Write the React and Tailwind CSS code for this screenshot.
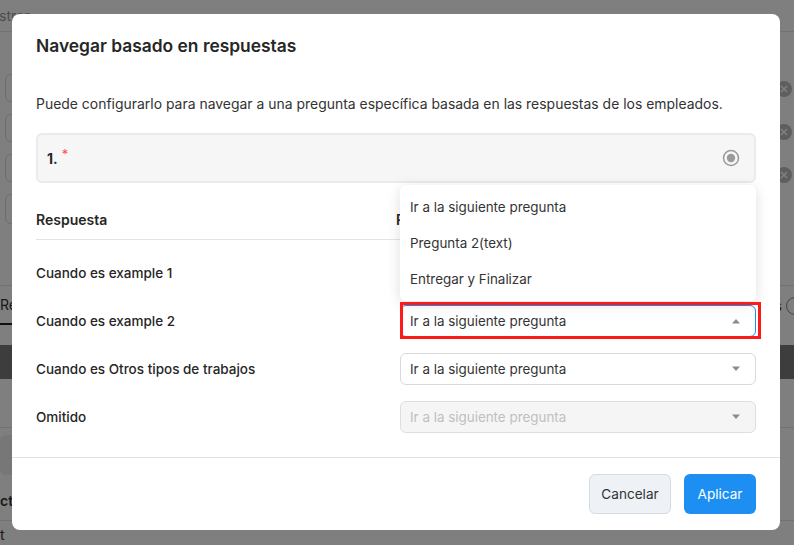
import React from "react";

const font = { fontFamily: "Inter, 'Noto Sans', sans-serif" };

function Caret({ up = false, color = "#8c8c8c" }) {
  return (
    <svg width="10" height="6" viewBox="0 0 10 6" className="shrink-0">
      {up ? (
        <path d="M1 5.5 L5 1 L9 5.5 Z" fill={color} />
      ) : (
        <path d="M1 0.5 L9 0.5 L5 5 Z" fill={color} />
      )}
    </svg>
  );
}

function Select({ disabled = false, focused = false, up = false }) {
  return (
    <div
      className={
        "h-8 w-[356px] flex items-center justify-between pl-[9px] pr-[14px] rounded-md border text-[13.4px] font-normal " +
        (disabled
          ? "bg-[#f5f5f5] border-[#dedede] text-[#bfbfbf]"
          : focused
          ? "bg-white border-[#1e8ff2] text-[#333]"
          : "bg-white border-[#d9d9d9] text-[#333]")
      }
    >
      <span>Ir a la siguiente pregunta</span>
      <Caret up={up} />
    </div>
  );
}

function CircleX() {
  return (
    <svg width="18" height="18" viewBox="0 0 18 18">
      <circle cx="9" cy="9" r="8" fill="#bdbdbd" />
      <path d="M6 6 L12 12 M12 6 L6 12" stroke="#fff" strokeWidth="1.6" />
    </svg>
  );
}

function Background() {
  return (
    <div className="absolute inset-0 bg-white flex flex-col text-[14px] text-[#333]">
      <div className="h-[33px] border-b border-[#e5e5e5] flex items-center">
        <span className="-ml-[22px] text-[#999]">Mostrar</span>
      </div>
      <div className="flex justify-between h-[210px]">
        <div className="flex flex-col gap-3 pt-[42px] pl-[5px]">
          <div className="w-[40px] h-[28px] border border-[#d9d9d9] rounded-md" />
          <div className="w-[40px] h-[28px] border border-[#d9d9d9] rounded-md" />
          <div className="w-[40px] h-[28px] border border-[#d9d9d9] rounded-md" />
          <div className="w-[40px] h-[30px] border border-[#d9d9d9] rounded-md" />
        </div>
        <div className="flex flex-col gap-[25px] pt-[48px] pr-[1px]">
          <CircleX />
          <CircleX />
          <CircleX />
        </div>
      </div>
      <div className="h-[50px] border-b border-[#e5e5e5]" />
      <div className="h-[40px] flex items-center justify-between">
        <div className="h-full flex items-center border-b-2 border-[#222] w-[40px]">
          <span>Respuestas</span>
        </div>
        <div className="flex items-center gap-1 -mr-[10px]">
          <span>s</span>
          <div className="w-[18px] h-[18px] rounded-full border border-[#888]" />
        </div>
      </div>
      <div className="h-[20px]" />
      <div className="h-[35px] bg-[#7a7a7a]" />
      <div className="h-[50px] border-b border-[#e5e5e5]" />
      <div className="h-[55px] flex items-center">
        <div className="w-[24px] h-[40px] rounded-md bg-[#eeeeee]" />
      </div>
      <div className="h-[40px] flex items-center border-b border-[#e5e5e5]">
        <span className="-ml-[40px] font-semibold">Productos</span>
      </div>
      <div className="h-[25px] flex items-end">
        <span className="text-[#333]">t</span>
      </div>
    </div>
  );
}

export default function App() {
  return (
    <div className="relative w-[794px] h-[545px] overflow-hidden" style={font}>
      <Background />
      <div className="absolute inset-0 bg-black/50" />
      {/* Modal */}
      <div className="absolute left-[12px] top-[14px] w-[768px] h-[516px] bg-white rounded-lg flex flex-col">
        <div className="px-6 pt-5">
          <h2 className="text-[17.4px] leading-6 font-semibold text-[#262626]">
            Navegar basado en respuestas
          </h2>
          <p className="mt-[36px] text-[13.95px] leading-5 text-[#333]">
            Puede configurarlo para navegar a una pregunta específica basada en las respuestas de los empleados.
          </p>
          <div className="mt-[19px] h-[50px] rounded-md border-2 border-[#ebebeb] bg-[#f6f6f6] flex items-center justify-between pl-[9px] pr-[14px]">
            <div className="flex items-start text-[14px] font-bold text-[#262626]">
              <span>1.</span>
              <span className="ml-[4px] -mt-[3px] text-[#ff4d4f] font-normal text-[13px]">*</span>
            </div>
            <svg width="18" height="18" viewBox="0 0 18 18">
              <circle cx="9" cy="9" r="7.5" fill="none" stroke="#9a9a9a" strokeWidth="1.5" />
              <circle cx="9" cy="9" r="4.2" fill="#9a9a9a" />
            </svg>
          </div>
          <div className="mt-[15px] h-[42px] flex items-center border-b border-[#e3e3e3] text-[14px] font-semibold text-[#262626]">
            <div className="w-[360px] pt-[2px]">Respuesta</div>
            <div className="pt-[2px]">Redirigir a</div>
          </div>
          <div className="pt-[9px] flex flex-col text-[13.5px] text-[#262626] font-medium">
            <div className="h-12 flex items-center">
              <div className="w-[364px]">Cuando es example 1</div>
              <Select />
            </div>
            <div className="h-12 flex items-center">
              <div className="w-[364px]">Cuando es example 2</div>
              <Select focused up />
            </div>
            <div className="h-12 flex items-center">
              <div className="w-[364px]">Cuando es Otros tipos de trabajos</div>
              <Select />
            </div>
            <div className="h-12 flex items-center">
              <div className="w-[364px]">Omitido</div>
              <Select disabled />
            </div>
          </div>
        </div>
        <div className="mt-auto border-t border-[#e3e3e3] h-[73px] flex items-center justify-end gap-[13px] px-6">
          <button className="h-10 w-[82px] rounded-md border border-[#d3dbe3] bg-[#eef2f6] text-[13.6px] text-[#333]">
            Cancelar
          </button>
          <button className="h-10 w-[72px] rounded-md bg-[#1e8ff2] text-[13.6px] text-white">
            Aplicar
          </button>
        </div>
      </div>

      {/* Dropdown menu */}
      <div className="absolute left-[400px] top-[185px] w-[356px] bg-white rounded-md shadow-[0_3px_14px_rgba(0,0,0,0.13)] py-1 text-[13.4px] text-[#333]">
        <div className="h-9 flex items-center px-[10px]">Ir a la siguiente pregunta</div>
        <div className="h-9 flex items-center px-[10px]">Pregunta 2(text)</div>
        <div className="h-9 flex items-center px-[10px]">Entregar y Finalizar</div>
      </div>

      {/* Red highlight */}
      <div className="absolute left-[400px] top-[302px] w-[361px] h-[37px] border-[3px] border-[#ff1a1a] pointer-events-none" />
    </div>
  );
}
